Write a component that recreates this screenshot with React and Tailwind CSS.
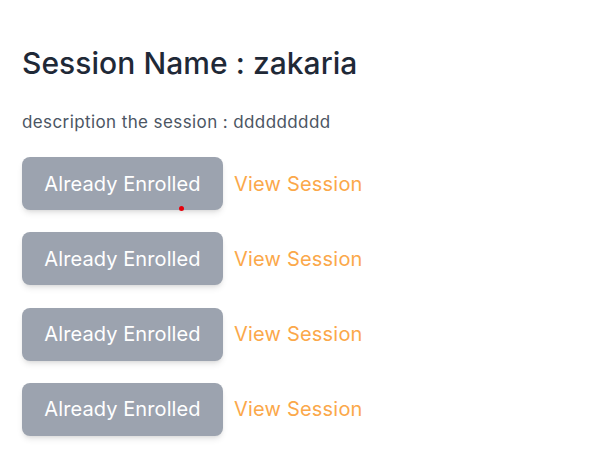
import React from "react";

const rows = [1, 2, 3, 4];

const App = () => {
    return (
        <div className="min-h-screen bg-white px-[22px] pt-[44px] font-['Inter',sans-serif]">
            <h1 className="text-[30px] leading-[38px] font-medium text-[#1f2937] tracking-[0.05px]">
                Session Name : zakaria
            </h1>
            <p className="mt-[28px] text-[17px] leading-6 text-[#4b5563] tracking-[0.4px]">
                description the session : ddddddddd
            </p>
            <div className="mt-[23px] flex flex-col gap-[22.3px]">
                {rows.map((r, i) => (
                    <div key={r} className="flex items-center gap-[11px]">
                        <div className="relative">
                            <button className="w-[201px] h-[53px] rounded-lg bg-[#9ca3af] text-white text-[20px] tracking-[0.1px] shadow-md">
                                Already Enrolled
                            </button>
                            {i === 0 && (
                                <span className="absolute left-[157px] top-[49px] w-[5px] h-[5px] rounded-full bg-red-600" />
                            )}
                        </div>
                        <a href="#" className="text-[20px] text-[#fba84a] tracking-[0.2px]">
                            View Session
                        </a>
                    </div>
                ))}
            </div>
        </div>
    );
};

export default App;
